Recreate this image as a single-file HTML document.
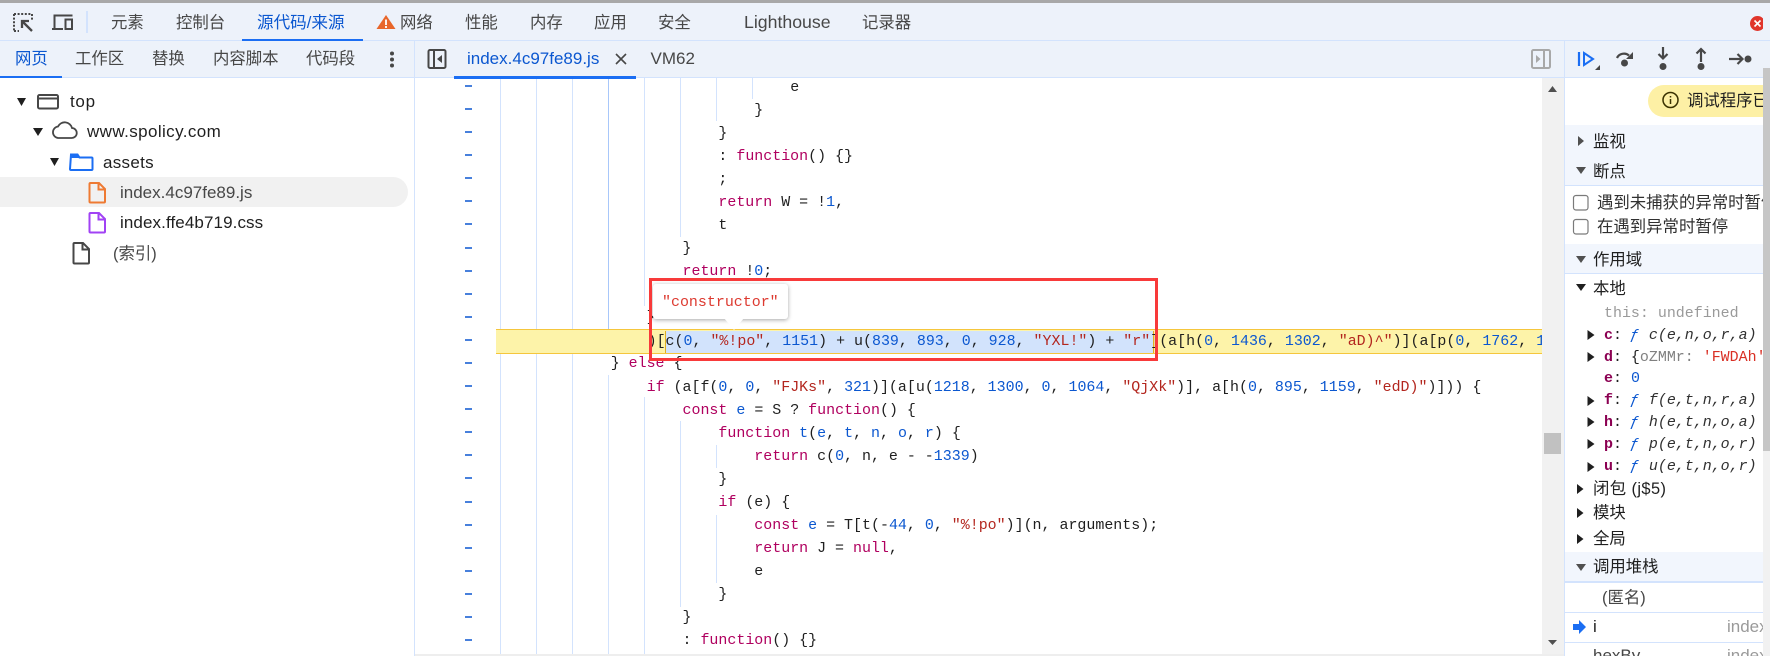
<!DOCTYPE html>
<html><head><meta charset="utf-8"><style>
html,body{margin:0;padding:0}
body{width:1770px;height:656px;position:relative;overflow:hidden;background:#fff;font-family:"Liberation Sans","Noto Sans CJK SC",sans-serif;color:#1f1f1f}
.b{position:absolute}
.t{position:absolute;line-height:20px;height:20px;white-space:nowrap;font-size:16.4px;color:#474747}
.tr{color:#1f1f1f;font-size:17px}
.l{position:absolute;height:23px;line-height:23px;white-space:pre;font-family:"Liberation Mono",monospace;font-size:14.96px;color:#1f1f1f;top:calc(77px + 23.04px*var(--i));left:calc(503px + 35.9px*var(--n))}
.k{color:#b0005f}.n{color:#0b57d0}.s{color:#b3261e}.v{color:#0b57d0}
.m{position:absolute;height:20px;line-height:20px;white-space:pre;font-family:"Liberation Mono",monospace;font-size:14.96px;color:#1f1f1f}
.m b{color:#8b0052}.m i{color:#303030}.m .f{color:#0b57d0}
.g{position:absolute;width:1px;background:#d3e3fd}
svg{position:absolute;overflow:visible}
</style></head><body>
<!-- code lines -->
<div class="b" style="left:415px;top:78px;width:1127px;height:576px;overflow:hidden;background:#fff"></div>
<div class="g" style="left:500px;top:78px;height:576px"></div>
<div class="g" style="left:536px;top:78px;height:576px"></div>
<div class="g" style="left:572px;top:78px;height:576px"></div>
<div class="g" style="left:608px;top:78px;height:252px;background:#a8c7fa"></div>
<div class="g" style="left:608px;top:375px;height:279px"></div>
<div class="g" style="left:644px;top:78px;height:228px"></div>
<div class="g" style="left:644px;top:397px;height:257px"></div>
<div class="g" style="left:680px;top:78px;height:159px"></div>
<div class="g" style="left:680px;top:421px;height:186px"></div>
<div class="g" style="left:716px;top:78px;height:43px"></div>
<div class="g" style="left:716px;top:445px;height:23px"></div>
<div class="g" style="left:716px;top:515px;height:68px"></div>
<div class="g" style="left:752px;top:78px;height:21px"></div>
<svg style="left:0;top:0" width="1770" height="656"><path d="M465 86h7M465 109h7M465 132h7M465 155h7M465 178h7M465 201h7M465 224h7M465 248h7M465 271h7M465 294h7M465 317h7M465 340h7M465 363h7M465 386h7M465 409h7M465 432h7M465 455h7M465 478h7M465 502h7M465 525h7M465 548h7M465 571h7M465 594h7M465 617h7M465 640h7" stroke="#0b57d0" stroke-width="1.5"/></svg>
<div class="b" style="left:496px;top:329px;width:1046px;height:25px;box-sizing:border-box;background:#fdf3a9;border-top:1px solid #f5c63c;border-bottom:1px solid #f5c63c"></div>
<div class="b" style="left:666px;top:331px;width:487px;height:22px;background:#d2e3fc"></div>
<div class="b" style="left:665px;top:331px;width:1px;height:22px;background:#e0b020"></div>
<div class="b" style="left:1153px;top:331px;width:1px;height:22px;background:#e0b020"></div>
<div class="l" style="--i:0;--n:8">e</div>
<div class="l" style="--i:1;--n:7">}</div>
<div class="l" style="--i:2;--n:6">}</div>
<div class="l" style="--i:3;--n:6">: <span class="k">function</span>() {}</div>
<div class="l" style="--i:4;--n:6">;</div>
<div class="l" style="--i:5;--n:6"><span class="k">return</span> W = !<span class="n">1</span>,</div>
<div class="l" style="--i:6;--n:6">t</div>
<div class="l" style="--i:7;--n:5">}</div>
<div class="l" style="--i:8;--n:5"><span class="k">return</span> !<span class="n">0</span>;</div>
<div class="l" style="--i:10;--n:4">}</div>
<div class="b" style="left:496px;top:330px;width:1046px;height:24px;overflow:hidden"><div class="l" style="top:1px;left:151.6px">)[c(<span class="n">0</span>, <span class="s">"%!po"</span>, <span class="n">1151</span>) + u(<span class="n">839</span>, <span class="n">893</span>, <span class="n">0</span>, <span class="n">928</span>, <span class="s">"YXL!"</span>) + <span class="s">"r"</span>](a[h(<span class="n">0</span>, <span class="n">1436</span>, <span class="n">1302</span>, <span class="s">"aD)^"</span>)](a[p(<span class="n">0</span>, <span class="n">1762</span>, <span class="n">1</span></div></div>
<div class="l" style="--i:12;--n:3">} <span class="k">else</span> {</div>
<div class="l" style="--i:13;--n:4"><span class="k">if</span> (a[f(<span class="n">0</span>, <span class="n">0</span>, <span class="s">"FJKs"</span>, <span class="n">321</span>)](a[u(<span class="n">1218</span>, <span class="n">1300</span>, <span class="n">0</span>, <span class="n">1064</span>, <span class="s">"QjXk"</span>)], a[h(<span class="n">0</span>, <span class="n">895</span>, <span class="n">1159</span>, <span class="s">"edD)"</span>)])) {</div>
<div class="l" style="--i:14;--n:5"><span class="k">const</span> <span class="v">e</span> = S ? <span class="k">function</span>() {</div>
<div class="l" style="--i:15;--n:6"><span class="k">function</span> <span class="v">t</span>(<span class="v">e</span>, <span class="v">t</span>, <span class="v">n</span>, <span class="v">o</span>, <span class="v">r</span>) {</div>
<div class="l" style="--i:16;--n:7"><span class="k">return</span> c(<span class="n">0</span>, n, e - -<span class="n">1339</span>)</div>
<div class="l" style="--i:17;--n:6">}</div>
<div class="l" style="--i:18;--n:6"><span class="k">if</span> (e) {</div>
<div class="l" style="--i:19;--n:7"><span class="k">const</span> <span class="v">e</span> = T[t(-<span class="n">44</span>, <span class="n">0</span>, <span class="s">"%!po"</span>)](n, arguments);</div>
<div class="l" style="--i:20;--n:7"><span class="k">return</span> J = <span class="k">null</span>,</div>
<div class="l" style="--i:21;--n:7">e</div>
<div class="l" style="--i:22;--n:6">}</div>
<div class="l" style="--i:23;--n:5">}</div>
<div class="l" style="--i:24;--n:5">: <span class="k">function</span>() {}</div>
<!-- tooltip -->
<div class="b" style="left:653px;top:284px;width:135px;height:35px;background:#fff;border-radius:3px;box-shadow:0 1px 4px rgba(0,0,0,.35)"></div>
<svg style="left:0;top:0" width="1770" height="656"><path d="M724 318h20l-10 12z" fill="#fff"/></svg>
<div class="m" style="left:662px;top:293px;color:#dd3a30">"constructor"</div>
<div class="b" style="left:648.5px;top:278px;width:509px;height:83px;box-sizing:border-box;border:3.4px solid #f83a3a"></div>
<!-- editor scrollbar -->
<div class="b" style="left:1542px;top:78px;width:22px;height:578px;background:#f1f1f1"></div>
<div class="b" style="left:1544px;top:433px;width:17px;height:21px;background:#c1c1c1"></div>
<svg style="left:0;top:0" width="1770" height="656"><path d="M1548 92l4.500-6 4.500 6zM1548 640l4.500 5 4.500-5z" fill="#505050"/></svg>
<div class="b" style="left:415px;top:654px;width:1149px;height:2px;background:#eee"></div>
<!-- top -->
<div class="b" style="left:0;top:3px;width:1770px;height:37px;background:#edf2fa"></div>
<div class="b" style="left:0;top:0;width:1770px;height:3px;background:#a8a8a8"></div>
<div class="b" style="left:0;top:40px;width:1770px;height:1px;background:#d3e3fd"></div>
<div class="b" style="left:0;top:41px;width:1770px;height:36px;background:#edf2fa"></div>
<div class="b" style="left:0;top:77px;width:1770px;height:1px;background:#d3e3fd"></div>
<div class="b" style="left:86px;top:11px;width:1.500px;height:22px;background:#d3e3fd"></div>
<svg style="left:0;top:0" width="100" height="45" fill="none" stroke="#474747">
<path d="M14 14h18M14 14v17M32 14v6M14 31h5" stroke-width="2" stroke-dasharray="2 1.6"/>
<path d="M32 31l-9-9M22 28v-7h7" stroke-width="2.300"/>
<path d="M52 29h11M54.500 28V15.500h18" stroke-width="2"/>
<rect x="65.500" y="19.500" width="6.500" height="9.500" stroke-width="2"/>
</svg>
<div class="t" style="left:111px;top:13px">元素</div>
<div class="t" style="left:176px;top:13px">控制台</div>
<div class="t" style="left:257px;top:13px;color:#0b57d0;font-size:16.6px">源代码/来源</div>
<div class="b" style="left:242px;top:38.500px;width:121px;height:2px;background:#1b6ef3"></div>
<svg style="left:0;top:0" width="420" height="40"><path d="M386 15l9.500 14h-19z" fill="#e8662a"/><path d="M386 19.500v5.500M386 26v2" stroke="#fff" stroke-width="1.800"/></svg>
<div class="t" style="left:400px;top:13px">网络</div>
<div class="t" style="left:465px;top:13px">性能</div>
<div class="t" style="left:530px;top:13px">内存</div>
<div class="t" style="left:594px;top:13px">应用</div>
<div class="t" style="left:658px;top:13px">安全</div>
<div class="t" style="left:744px;top:12px;font-size:17.700px">Lighthouse</div>
<div class="t" style="left:862px;top:13px">记录器</div>
<div class="b" style="left:1750px;top:16px;width:13px;height:15px;overflow:hidden"><div class="b" style="left:0;top:0;width:15px;height:15px;border-radius:50%;background:#e0352b"></div><svg style="left:0;top:0" width="15" height="15"><path d="M4.500 4.500l6 6M10.500 4.500l-6 6" stroke="#fff" stroke-width="1.600"/></svg></div>
<!-- second row -->
<div class="t" style="left:15px;top:49px;color:#0b57d0">网页</div>
<div class="b" style="left:0;top:76px;width:62px;height:2px;background:#1b6ef3"></div>
<div class="t" style="left:75px;top:49px">工作区</div>
<div class="t" style="left:152px;top:49px">替换</div>
<div class="t" style="left:213px;top:49px">内容脚本</div>
<div class="t" style="left:306px;top:49px">代码段</div>
<svg style="left:0;top:0" width="400" height="78"><circle cx="392" cy="53.500" r="2" fill="#474747"/><circle cx="392" cy="59.500" r="2" fill="#474747"/><circle cx="392" cy="65.500" r="2" fill="#474747"/></svg>
<div class="b" style="left:414px;top:41px;width:1px;height:615px;background:#d3e3fd"></div>
<svg style="left:0;top:0" width="460" height="78" fill="none"><rect x="428.500" y="50" width="17" height="18" rx="1.500" stroke="#474747" stroke-width="2"/><path d="M434 50v18" stroke="#474747" stroke-width="2"/><path d="M442 55v8l-5-4z" fill="#474747"/></svg>
<div class="t" style="left:467px;top:49px;color:#0b57d0;font-size:17px">index.4c97fe89.js</div>
<svg style="left:0;top:0" width="640" height="78"><path d="M616 54l10 10M626 54l-10 10" stroke="#474747" stroke-width="1.600"/></svg>
<div class="b" style="left:454px;top:76px;width:182px;height:2.500px;background:#1b6ef3"></div>
<div class="t" style="left:650.500px;top:49px;font-size:17px">VM62</div>
<svg style="left:0;top:0" width="1560" height="78" fill="none"><rect x="1532" y="50" width="18" height="18" rx="1.500" stroke="#a8a8a8" stroke-width="2"/><path d="M1544 50v18" stroke="#a8a8a8" stroke-width="2"/><path d="M1536 55v8l4.500-4z" fill="#a8a8a8"/></svg>
<!-- tree -->
<div class="b" style="left:0;top:177px;width:408px;height:30px;background:#f1f1f1;border-radius:0 15px 15px 0"></div>
<svg style="left:0;top:0" width="300" height="270" fill="none">
<path d="M17 98h9l-4.500 8zM33 128h10l-5 8zM50 158h9l-4.500 8z" fill="#1f1f1f"/>
<rect x="38" y="95" width="20" height="13.500" rx="1.500" stroke="#474747" stroke-width="2"/><path d="M38 98.500h20" stroke="#474747" stroke-width="2"/>
<path d="M58 138h13.500a5 5 0 0 0 .5-10 7.500 7.500 0 0 0-14-1.500A5.800 5.800 0 0 0 58 138z" stroke="#474747" stroke-width="1.800"/>
<path d="M71 154.500h6.500l2 3H91.500a1 1 0 0 1 1 1V169a1 1 0 0 1-1 1H71a1 1 0 0 1-1-1z" stroke="#1b6ef3" stroke-width="2"/><path d="M70 155h7.500l2 3H70z" fill="#1b6ef3"/>
<path d="M90.500 183h8.500l6 6v12.500a1 1 0 0 1-1 1H90.500a1 1 0 0 1-1-1V184a1 1 0 0 1 1-1zM98.500 183v6.500h6.500" stroke="#ee7a33" stroke-width="2"/>
<path d="M90.500 213h8.500l6 6v12.500a1 1 0 0 1-1 1H90.500a1 1 0 0 1-1-1V214a1 1 0 0 1 1-1zM98.500 213v6.500h6.500" stroke="#a142f4" stroke-width="2"/>
<path d="M74.500 243h8.500l6 6v13.500a1 1 0 0 1-1 1H74.500a1 1 0 0 1-1-1V244a1 1 0 0 1 1-1zM82.500 243v6.500h6.500" stroke="#474747" stroke-width="2"/>
</svg>
<div class="t tr" style="left:70px;top:92px;letter-spacing:.7px">top</div>
<div class="t tr" style="left:87px;top:122px;letter-spacing:.4px">www.spolicy.com</div>
<div class="t tr" style="left:103px;top:153px;letter-spacing:.3px">assets</div>
<div class="t tr" style="left:120px;top:183px;color:#474747">index.4c97fe89.js</div>
<div class="t tr" style="left:120px;top:213px;letter-spacing:.1px">index.ffe4b719.css</div>
<div class="t tr" style="left:113px;top:244px;font-size:16.400px;color:#474747">(索引)</div>
<!-- debugger pane -->
<div class="b" style="left:1564px;top:41px;width:1px;height:615px;background:#d3e3fd"></div>
<svg style="left:0;top:0" width="1770" height="78" fill="none">
<path d="M1579 52v14" stroke="#1b6ef3" stroke-width="2.200"/><path d="M1584 53l9 6-9 6z" stroke="#1b6ef3" stroke-width="2"/><path d="M1600 65v5h-5z" fill="#474747"/>
<path d="M1617 58a7.500 7 0 0 1 12-2.500" stroke="#474747" stroke-width="2.200"/><path d="M1633 52v7h-7z" fill="#474747"/><circle cx="1624.500" cy="63" r="3.500" fill="#474747"/>
<path d="M1663 47v11M1658.500 54l4.500 4.500 4.500-4.500" stroke="#474747" stroke-width="2.200"/><circle cx="1663" cy="66.500" r="3.500" fill="#474747"/>
<path d="M1701 62V50M1696.500 53.500l4.500-4.500 4.500 4.500" stroke="#474747" stroke-width="2.200"/><circle cx="1701" cy="66.500" r="3.500" fill="#474747"/>
<path d="M1729 59h13M1737.500 54l5 5-5 5" stroke="#474747" stroke-width="2.200"/><circle cx="1748" cy="59" r="3.500" fill="#474747"/>
</svg>
<div class="b" style="left:1565px;top:78px;width:198px;height:578px;background:#fff"></div>
<div class="b" style="left:1648px;top:85px;width:115px;height:32px;background:#fdf0a5;border-radius:16px 0 0 16px;overflow:hidden"><div class="t" style="left:39px;top:6px;color:#1f1f1f;font-size:16.400px">调试程序已暂停</div></div>
<svg style="left:0;top:0" width="1700" height="120" fill="none"><circle cx="1670.500" cy="100" r="7.500" stroke="#3a3100" stroke-width="1.500"/><path d="M1670.500 99v5M1670.500 96v1.500" stroke="#3a3100" stroke-width="1.500"/></svg>
<div class="b" style="left:1565px;top:125px;width:198px;height:60px;background:#f2f6fd"></div>
<div class="b" style="left:1565px;top:185px;width:198px;height:1px;background:#d3e3fd"></div>
<div class="b" style="left:1565px;top:244px;width:198px;height:29px;background:#f2f6fd"></div>
<div class="b" style="left:1565px;top:273px;width:198px;height:1px;background:#d3e3fd"></div>
<div class="b" style="left:1565px;top:552px;width:198px;height:29px;background:#f2f6fd"></div>
<div class="b" style="left:1565px;top:581px;width:198px;height:2px;background:#d3e3fd"></div>
<div class="b" style="left:1565px;top:612px;width:198px;height:1px;background:#d3e3fd"></div>
<div class="b" style="left:1565px;top:642px;width:198px;height:1px;background:#d3e3fd"></div>
<svg style="left:0;top:0" width="1770" height="656">
<path d="M1578 136v10l6-5zM1576 167h10l-5 7zM1576 256h10l-5 7zM1576 564h10l-5 7z" fill="#505050"/>
<path d="M1576 284h10l-5 7zM1577 484v10l6.500-5zM1577 508v10l6.500-5zM1577 534v10l6.500-5z" fill="#1f1f1f"/>
<path d="M1587.500 330v10l7-5zM1587.500 352v10l7-5zM1587.500 396v10l7-5zM1587.500 417v10l7-5zM1587.500 439v10l7-5zM1587.500 462v10l7-5z" fill="#1f1f1f"/>
<path d="M1573 624h6v-4l7 7-7 7v-4h-6z" fill="#1b6ef3"/>
<rect x="1573.500" y="195.500" width="14.500" height="14.500" rx="2.500" fill="#fff" stroke="#7a7a7a" stroke-width="1.200"/>
<rect x="1573.500" y="219.500" width="14.500" height="14.500" rx="2.500" fill="#fff" stroke="#7a7a7a" stroke-width="1.200"/>
</svg>
<div class="t" style="left:1593px;top:132px;color:#1f1f1f">监视</div>
<div class="t" style="left:1593px;top:162px;color:#1f1f1f">断点</div>
<div class="b" style="left:1565px;top:190px;width:198px;height:50px;overflow:hidden">
<div class="t" style="left:32px;top:3px;color:#303030">遇到未捕获的异常时暂停</div>
<div class="t" style="left:32px;top:27px;color:#303030">在遇到异常时暂停</div>
</div>
<div class="t" style="left:1593px;top:250px;color:#1f1f1f">作用域</div>
<div class="t" style="left:1593px;top:279px;color:#1f1f1f">本地</div>
<div class="b" style="left:1565px;top:301px;width:198px;height:180px;overflow:hidden">
<div class="m" style="left:39px;top:3px;color:#9a9a9a">this: undefined</div>
<div class="m" style="left:39px;top:25px"><b>c</b>:   <i>c(e,n,o,r,a)</i></div>
<div class="m" style="left:39px;top:47px"><b>d</b>: {<span style="color:#808080">oZMMr: </span><span style="color:#d93025">'FWDAh'</span></div>
<div class="m" style="left:39px;top:68px"><b>e</b>: <span class="f">0</span></div>
<div class="m" style="left:39px;top:90px"><b>f</b>:   <i>f(e,t,n,r,a)</i></div>
<div class="m" style="left:39px;top:112px"><b>h</b>:   <i>h(e,t,n,o,a)</i></div>
<div class="m" style="left:39px;top:134px"><b>p</b>:   <i>p(e,t,n,o,r)</i></div>
<div class="m" style="left:39px;top:156px"><b>u</b>:   <i>u(e,t,n,o,r)</i></div>
<div class="m f" style="left:65px;top:25px;color:#0b57d0;font-style:italic">ƒ</div>
<div class="m f" style="left:65px;top:90px;color:#0b57d0;font-style:italic">ƒ</div>
<div class="m f" style="left:65px;top:112px;color:#0b57d0;font-style:italic">ƒ</div>
<div class="m f" style="left:65px;top:134px;color:#0b57d0;font-style:italic">ƒ</div>
<div class="m f" style="left:65px;top:156px;color:#0b57d0;font-style:italic">ƒ</div>
</div>
<div class="t" style="left:1593px;top:479px;color:#1f1f1f;letter-spacing:.4px">闭包 (j$5)</div>
<div class="t" style="left:1593px;top:503px;color:#1f1f1f">模块</div>
<div class="t" style="left:1593px;top:529px;color:#1f1f1f">全局</div>
<div class="t" style="left:1593px;top:557px;color:#1f1f1f">调用堆栈</div>
<div class="t" style="left:1602px;top:588px">(匿名)</div>
<div class="t" style="left:1593px;top:617px;color:#1f1f1f;font-size:17px">i</div>
<div class="b" style="left:1727px;top:617px;width:36px;height:20px;overflow:hidden"><div class="t" style="left:0;top:0;color:#9a9a9a;font-size:17px">index</div></div>
<div class="b" style="left:1565px;top:643px;width:198px;height:13px;overflow:hidden">
<div class="t" style="left:28px;top:3px;font-size:17px">hexBy</div>
<div class="t" style="left:162px;top:3px;color:#9a9a9a;font-size:17px">index</div>
</div>
<!-- outer scrollbar -->
<div class="b" style="left:1763px;top:68px;width:7px;height:383px;background:#c6c6c6"></div>
<div class="b" style="left:1763px;top:451px;width:7px;height:205px;background:#f1f1f1"></div>
</body></html>
